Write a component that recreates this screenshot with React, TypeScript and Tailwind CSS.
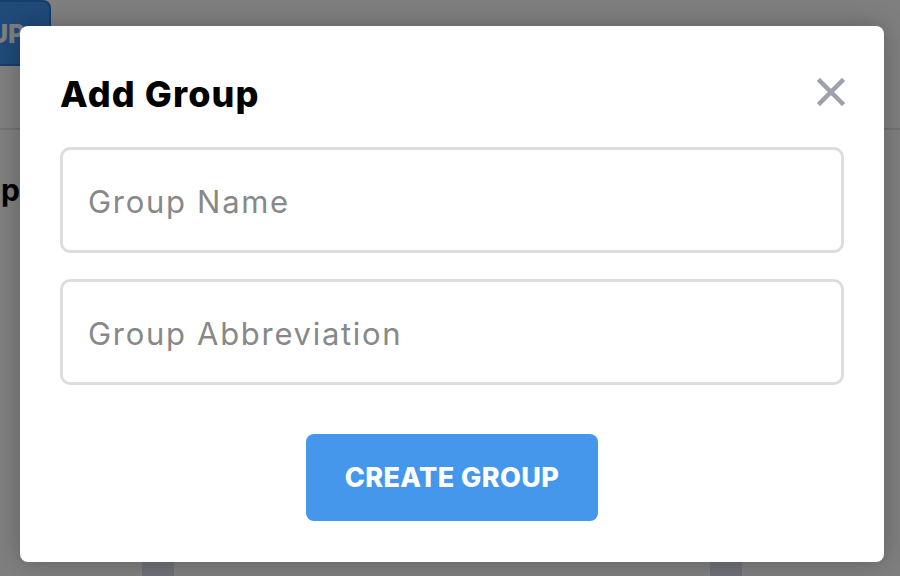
import React from "react";

export default function App() {
  return (
    <div className="relative w-[900px] h-[576px] overflow-hidden bg-white" style={{ fontFamily: "Inter, 'Open Sans', sans-serif" }}>
      {/* background page */}
      <div className="flex flex-col">
        <div className="h-[130px] border-b-2 border-[#e6e6e6]">
          <div className="-ml-[120px] w-[171px] h-[66px] rounded-lg bg-[#3e94f4] border-2 border-[#2f7ad6] flex items-center justify-end pr-[24px] text-white font-extrabold text-[26px]">
            GROUP
          </div>
        </div>
        <div className="pt-[40px] -ml-[70px] text-[30px] font-bold text-black leading-[40px]">Group</div>
        <div className="mt-auto flex">
          <div className="ml-[142px] mt-[346px] w-[32px] h-[20px] bg-[#dee0ee]" />
          <div className="ml-[536px] mt-[346px] w-[32px] h-[20px] bg-[#dee0ee]" />
        </div>
      </div>

      {/* overlay */}
      <div className="absolute inset-0 bg-black/50" />

      {/* modal */}
      <div className="absolute left-[20px] top-[26px] w-[864px] h-[536px] rounded-lg bg-white px-10 pt-10 flex flex-col shadow-[0_0_24px_rgba(0,0,0,0.25)]">
        <div className="flex items-center justify-between h-[52px]">
          <h2 className="pt-[3px] text-[36px] font-extrabold text-black tracking-[1.1px] leading-none">Add Group</h2>
          <svg width="28" height="28" viewBox="0 0 28 28" className="-mr-[1px]">
            <path d="M3 3 L25 25 M25 3 L3 25" stroke="#9ca1ab" strokeWidth="4.5" strokeLinecap="square" />
          </svg>
        </div>
        <div className="mt-[29px] flex flex-col gap-[26px]">
          <div className="h-[106px] rounded-[10px] border-[3px] border-[#dddddd] flex items-center px-[25px] pt-[5px]">
            <span className="text-[31px] text-[#888888] font-normal tracking-[1.7px]">Group Name</span>
          </div>
          <div className="h-[106px] rounded-[10px] border-[3px] border-[#dddddd] flex items-center px-[25px] pt-[5px]">
            <span className="text-[31px] text-[#888888] font-normal tracking-[1.7px]">Group Abbreviation</span>
          </div>
        </div>
        <div className="mt-[49px] flex justify-center">
          <button className="w-[292px] h-[87px] rounded-lg bg-[#4497eb] text-white text-[27px] font-extrabold tracking-[0.4px] pt-[2px]">
            CREATE GROUP
          </button>
        </div>
      </div>
    </div>
  );
}
